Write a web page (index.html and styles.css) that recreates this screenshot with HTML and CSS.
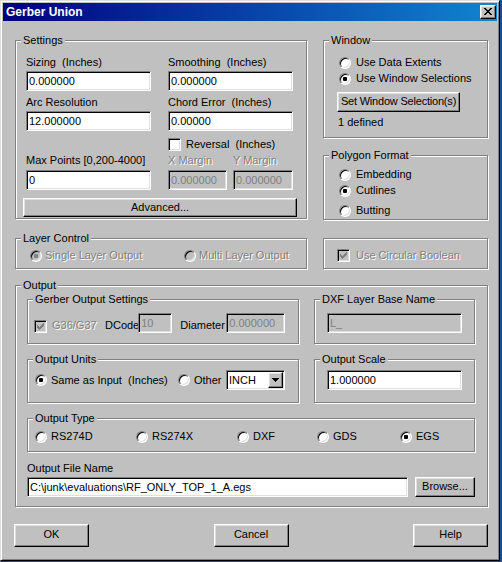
FILE: index.html
```html
<!DOCTYPE html>
<html lang="en">
<head>
  <meta charset="UTF-8">
  <title>Gerber Union</title>
  <link rel="stylesheet" href="styles.css">
</head>
<body>

<div class="window">
  <div class="titlebar">
    <span class="title">Gerber Union</span>
    <span class="raised close">
      <svg width="8" height="7" viewBox="0 0 8 7"><path d="M0 0h2v1H0zM6 0h2v1H6zM1 1h2v1H1zM5 1h2v1H5zM2 2h4v1H2zM3 3h2v1H3zM2 4h4v1H2zM1 5h2v1H1zM5 5h2v1H5zM0 6h2v1H0zM6 6h2v1H6z"/></svg>
    </span>
  </div>

  <div class="client">
    <div class="row top">
      <fieldset class="group settings">
        <legend>Settings</legend>
        <div class="settings-body">
          <div class="settings-cols">
            <div class="col">
              <span class="lbl">Sizing&nbsp; (Inches)</span>
              <input class="edit mt2" value="0.000000">
              <span class="lbl mt5">Arc Resolution</span>
              <input class="edit mt2" value="12.000000">
              <span class="lbl mt23">Max Points [0,200-4000]</span>
              <input class="edit mt3" value="0">
            </div>
            <div class="col">
              <span class="lbl">Smoothing&nbsp; (Inches)</span>
              <input class="edit mt2" value="0.000000">
              <span class="lbl mt5">Chord Error&nbsp; (Inches)</span>
              <input class="edit mt2" value="0.00000">
              <div class="opt mt7"><span class="check"></span>Reversal&nbsp; (Inches)</div>
              <div class="margins mt3">
                <div class="col">
                  <span class="lbl dis">X Margin</span>
                  <input class="edit mt3" value="0.000000" disabled>
                </div>
                <div class="col">
                  <span class="lbl dis">Y Margin</span>
                  <input class="edit mt3" value="0.000000" disabled>
                </div>
              </div>
            </div>
          </div>
          <button class="raised btn advanced">Advanced...</button>
        </div>
      </fieldset>

      <div class="side">
        <fieldset class="group">
          <legend>Window</legend>
          <div class="side-body window-body">
            <div class="opt"><span class="radio"></span>Use Data Extents</div>
            <div class="opt mt3"><span class="radio on"></span>Use Window Selections</div>
            <button class="raised btn selection mt7">Set Window Selection(s)</button>
            <span class="lbl mt4">1 defined</span>
          </div>
        </fieldset>
        <fieldset class="group polygon">
          <legend>Polygon Format</legend>
          <div class="side-body polygon-body">
            <div class="opt"><span class="radio"></span>Embedding</div>
            <div class="opt mt3"><span class="radio on"></span>Cutlines</div>
            <div class="opt mt7"><span class="radio"></span>Butting</div>
          </div>
        </fieldset>
      </div>
    </div>

    <div class="row layer-row">
      <fieldset class="group">
        <legend>Layer Control</legend>
        <div class="layer-body">
          <div class="opt gap3 single"><span class="radio off on"></span><span class="dis">Single Layer Output</span></div>
          <div class="opt gap3"><span class="radio off"></span><span class="dis">Multi Layer Output</span></div>
        </div>
      </fieldset>
      <fieldset class="group circular">
        <div class="circular-body">
          <div class="opt gap6">
            <span class="check off"><svg width="11" height="11" viewBox="0 0 11 11"><path d="M8 2h1v1H8zM7 3h2v1H7zM2 4h1v1H2zM6 4h3v1H6zM2 5h2v1H2zM5 5h3v1H5zM2 6h5v1H2zM3 7h3v1H3zM4 8h1v1H4z"/></svg></span>
            <span class="dis">Use Circular Boolean</span>
          </div>
        </div>
      </fieldset>
    </div>

    <fieldset class="group output">
      <legend>Output</legend>
      <div class="output-body">
        <div class="output-grid">
          <fieldset class="group">
            <legend>Gerber Output Settings</legend>
            <div class="gerber-body">
              <span class="check off"><svg width="11" height="11" viewBox="0 0 11 11"><path d="M8 2h1v1H8zM7 3h2v1H7zM2 4h1v1H2zM6 4h3v1H6zM2 5h2v1H2zM5 5h3v1H5zM2 6h5v1H2zM3 7h3v1H3zM4 8h1v1H4z"/></svg></span>
              <span class="lbl dis g36">G36/G37</span>
              <span class="lbl dcode">DCode</span>
              <input class="edit dcode-edit" value="10" disabled>
              <span class="lbl diameter">Diameter</span>
              <input class="edit diameter-edit" value="0.000000" disabled>
            </div>
          </fieldset>
          <fieldset class="group">
            <legend>DXF Layer Base Name</legend>
            <div class="box-body gerber-pad">
              <input class="edit wide" value="L_" disabled>
            </div>
          </fieldset>
          <fieldset class="group">
            <legend>Output Units</legend>
            <div class="units-body">
              <div class="opt gap4 same"><span class="radio on"></span>Same as Input&nbsp; (Inches)</div>
              <div class="opt gap4 other"><span class="radio"></span>Other</div>
              <div class="edit combo">
                <span class="combo-text">INCH</span>
                <span class="raised drop"><svg width="7" height="4" viewBox="0 0 7 4"><path d="M0 0h7v1H0zM1 1h5v1H1zM2 2h3v1H2zM3 3h1v1H3z"/></svg></span>
              </div>
            </div>
          </fieldset>
          <fieldset class="group">
            <legend>Output Scale</legend>
            <div class="box-body units-pad">
              <input class="edit wide" value="1.000000">
            </div>
          </fieldset>
          <fieldset class="group type">
            <legend>Output Type</legend>
            <div class="type-body">
              <div class="opt gap4 t1"><span class="radio"></span>RS274D</div>
              <div class="opt gap4 t1"><span class="radio"></span>RS274X</div>
              <div class="opt gap4 t2"><span class="radio"></span>DXF</div>
              <div class="opt gap4 t3"><span class="radio"></span>GDS</div>
              <div class="opt gap4"><span class="radio on"></span>EGS</div>
            </div>
          </fieldset>
        </div>
        <span class="lbl file-lbl">Output File Name</span>
        <div class="file-row">
          <input class="edit file" value="C:\junk\evaluations\RF_ONLY_TOP_1_A.egs">
          <button class="raised btn browse">Browse...</button>
        </div>
      </div>
    </fieldset>

    <div class="actions">
      <button class="raised btn action">OK</button>
      <button class="raised btn action">Cancel</button>
      <button class="raised btn action">Help</button>
    </div>
  </div>
</div>

</body>
</html>
```

FILE: styles.css
```css
body {
  margin: 0;
  background: #1f4a8c;
  font-family: "Liberation Sans", Arial, sans-serif;
  font-size: 11px;
  line-height: 13px;
  color: #000;
}

/* window frame */
.window {
  box-sizing: border-box;
  width: 500px;
  height: 561px;
  padding: 2px;
  background: #c0c0c0;
  border: 1px solid;
  border-color: #dfdfdf #000 #000 #dfdfdf;
  box-shadow: inset 1px 1px #fff, inset -1px -1px #808080;
}

.titlebar {
  display: flex;
  align-items: center;
  justify-content: space-between;
  height: 18px;
  padding: 0 1px 0 3px;
  background: linear-gradient(to right, #000080, #1084d0);
}

.title {
  color: #fff;
  font-weight: bold;
  font-size: 12px;
  line-height: 18px;
}

.raised {
  box-sizing: border-box;
  background: #c0c0c0;
  border: 1px solid;
  border-color: #fff #000 #000 #fff;
  box-shadow: inset -1px -1px #808080, inset 1px 1px #dfdfdf;
}

.close {
  width: 16px;
  height: 14px;
  padding: 2px 0 0 3px;
}

.close svg {
  display: block;
}

.client {
  padding: 13px 0 0 12px;
}

/* etched group boxes */
.group {
  box-sizing: border-box;
  margin: 0;
  padding: 0;
  min-width: 0;
  border: 1px solid #808080;
  box-shadow: 1px 1px #fff, inset 1px 1px #fff;
}

.group legend {
  margin-left: 5px;
  padding: 0 2px;
  line-height: 13px;
  background: #c0c0c0;
}

.row {
  display: grid;
  grid-template-columns: 292px 165px;
  column-gap: 16px;
  align-items: start;
}

.lbl {
  display: block;
  white-space: nowrap;
}

.dis {
  color: #808080;
  text-shadow: 1px 1px #fff;
}

/* sunken edit box */
.edit {
  box-sizing: border-box;
  display: block;
  height: 20px;
  margin: 0;
  padding: 0 2px;
  font: inherit;
  color: #000;
  background: #fff;
  border: 1px solid;
  border-color: #808080 #fff #fff #808080;
  box-shadow: inset 1px 1px #000, inset -1px -1px #dfdfdf;
  outline: none;
}

.edit:disabled {
  background: #c0c0c0;
  color: #808080;
}

.btn {
  font: inherit;
  color: #000;
  margin: 0;
  padding: 0;
  white-space: nowrap;
}

.opt {
  display: flex;
  align-items: center;
  gap: 5px;
  height: 13px;
  white-space: nowrap;
}

.gap3 { gap: 3px; }
.gap4 { gap: 4px; }
.gap6 { gap: 6px; }

.radio {
  flex: none;
  box-sizing: border-box;
  width: 12px;
  height: 12px;
  margin-left: 1px;
  border-radius: 50%;
  background: #fff;
  border: 1px solid;
  border-color: #808080 #fff #fff #808080;
  box-shadow: inset 1px 1px #000, inset -1px -1px #dfdfdf;
  display: flex;
  align-items: center;
  justify-content: center;
}

.radio.on::after {
  content: "";
  width: 4px;
  height: 4px;
  border-radius: 1px;
  background: #000;
}

.radio.off {
  background: #c0c0c0;
}

.radio.off.on::after {
  background: #808080;
}

.check {
  flex: none;
  box-sizing: border-box;
  width: 13px;
  height: 13px;
  background: #fff;
  border: 1px solid;
  border-color: #808080 #fff #fff #808080;
  box-shadow: inset 1px 1px #000, inset -1px -1px #dfdfdf;
}

.check svg {
  display: block;
}

.check.off {
  background: #c0c0c0;
}

.check.off svg {
  fill: #808080;
}

/* settings */
.settings-body {
  padding: 9px 9px 1px 7px;
}

.settings-cols {
  display: grid;
  grid-template-columns: 125px 125px;
  column-gap: 17px;
  margin-left: 3px;
}

.col {
  display: flex;
  flex-direction: column;
}

.col .edit {
  width: 100%;
}

.margins {
  display: grid;
  grid-template-columns: 59px 60px;
  column-gap: 6px;
}

.advanced {
  display: block;
  width: 274px;
  height: 19px;
  margin-top: 8px;
}

/* right hand column */
.side-body {
  padding-left: 14px;
}

.window-body {
  padding-top: 9px;
  padding-bottom: 8px;
}

.selection {
  display: block;
  width: 123px;
  height: 20px;
  margin-left: -1px;
  padding-bottom: 2px;
  letter-spacing: -0.2px;
}

.polygon {
  margin-top: 11px;
}

.polygon-body {
  padding-top: 6px;
  padding-bottom: 2px;
}

.layer-row {
  margin-top: 12px;
}

.layer-body {
  display: flex;
  padding: 4px 0 6px 13px;
}

.single {
  width: 154px;
}

.circular {
  margin-top: 6px;
}

.circular-body {
  padding: 10px 0 6px 13px;
}

/* output */
.output {
  width: 473px;
  margin-top: 10px;
}

.output-body {
  padding: 1px 12px 9px 11px;
}

.output-grid {
  display: grid;
  grid-template-columns: 272px 161px;
  column-gap: 15px;
  row-gap: 9px;
  align-items: start;
}

.gerber-body {
  display: flex;
  align-items: flex-end;
  padding: 7px 0 10px 6px;
}

.gerber-body .lbl {
  margin-bottom: 1px;
}

.g36 {
  width: 53px;
  margin-left: 5px;
}

.dcode-edit {
  width: 34px;
  margin-left: -1px;
}

.diameter {
  width: 46px;
  margin-left: 8px;
}

.diameter-edit {
  width: 59px;
}

.box-body {
  padding-left: 12px;
}

.gerber-pad {
  padding-top: 7px;
  padding-bottom: 10px;
}

.units-pad {
  padding-top: 4px;
  padding-bottom: 12px;
}

.wide {
  width: 135px;
}

.units-body {
  display: flex;
  align-items: center;
  height: 20px;
  padding: 4px 0 12px 6px;
}

.same {
  width: 143px;
}

.other {
  width: 49px;
}

.combo {
  display: flex;
  align-items: center;
  width: 59px;
  padding: 1px;
}

.combo-text {
  padding-left: 1px;
}

.drop {
  width: 15px;
  height: 16px;
  margin-left: auto;
  padding: 5px 0 0 3px;
}

.drop svg {
  display: block;
}

.type {
  grid-column: 1 / -1;
}

.type-body {
  display: flex;
  padding: 5px 0 8px 6px;
}

.t1 { width: 101px; }
.t2 { width: 80px; }
.t3 { width: 83px; }

.file-lbl {
  margin-top: 10px;
}

.file-row {
  display: flex;
  gap: 7px;
  margin-top: 2px;
}

.file {
  flex: none;
  width: 381px;
}

.browse {
  flex: none;
  width: 60px;
  height: 20px;
  padding-bottom: 1px;
}

.actions {
  display: flex;
  justify-content: space-between;
  width: 474px;
  margin: 17px 0 0 -1px;
}

.action {
  width: 75px;
  height: 23px;
  padding-bottom: 2px;
}

/* spacing helpers, last so they win over component margins */
.mt2 { margin-top: 2px; }
.mt3 { margin-top: 3px; }
.mt4 { margin-top: 4px; }
.mt5 { margin-top: 5px; }
.mt7 { margin-top: 7px; }
.mt23 { margin-top: 23px; }
```
